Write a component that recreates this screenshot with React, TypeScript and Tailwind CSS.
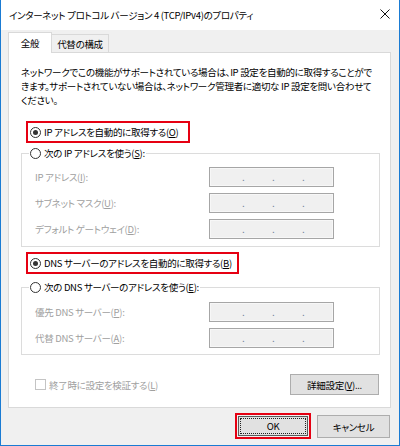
import type { ReactNode } from "react";

const font = {
  fontFamily: '"Noto Sans CJK JP", "Noto Sans", sans-serif',
};

const Radio = ({ checked }: { checked?: boolean }) => (
  <span className="flex h-[11px] w-[11px] shrink-0 items-center justify-center rounded-full border border-[#333333] bg-white">
    {checked && <span className="h-[5px] w-[5px] rounded-full bg-[#333333]" />}
  </span>
);

const IpInput = () => (
  <div className="flex h-[20px] w-[125px] items-center border border-[#a6a6a6] bg-[#f0f0f0] pl-[32px] text-[10px] leading-none text-[#6f8299] shadow-[inset_0_0_0_1px_#f7f7f7]">
    <span className="w-[30px]">.</span>
    <span className="w-[30px]">.</span>
    <span className="w-[30px]">.</span>
  </div>
);

const FieldRow = ({ label }: { label: ReactNode }) => (
  <div className="flex h-[20px] items-center pl-[13px]">
    <span className="w-[174px] text-[#a0a0a0]">{label}</span>
    <IpInput />
  </div>
);

const Group = ({
  legend,
  children,
  className,
}: {
  legend: ReactNode;
  children: ReactNode;
  className: string;
}) => (
  <fieldset className={`border border-[#dcdcdc] ${className}`}>
    <legend className="ml-[7px] flex h-[14px] items-center gap-[3px] bg-white px-[1px]">
      <Radio />
      <span>{legend}</span>
    </legend>
    {children}
  </fieldset>
);

export default function App() {
  return (
    <div
      style={font}
      className="flex h-[446px] w-[400px] flex-col whitespace-nowrap border-x border-b border-[#1a7bd3] bg-[#f0f0f0] text-[9.5px] leading-[14px] tracking-[-0.3px] text-black [font-feature-settings:'palt']"
    >
      {/* title bar */}
      <div className="flex h-[30px] shrink-0 items-center justify-between bg-white pl-[8px] pr-[8px]">
        <span>インターネット プロトコル バージョン 4 (TCP/IPv4)のプロパティ</span>
        <svg width="10" height="10" viewBox="0 0 10 10" className="mb-[2px] mr-[1px]">
          <path d="M0.5 0.5 L9.5 9.5 M9.5 0.5 L0.5 9.5" stroke="#111" strokeWidth="1" />
        </svg>
      </div>

      <div className="flex flex-1 flex-col pl-[7px] pr-[8px]">
        {/* tabs */}
        <div className="relative z-10 mt-[2px] flex h-[21px] items-end">
          <div className="flex h-[21px] w-[44px] items-center justify-center border border-b-0 border-[#d9d9d9] bg-white pb-[1px]">
            全般
          </div>
          <div className="mb-[1px] flex h-[18px] w-[57px] items-center justify-center border border-l-0 border-b-0 border-[#d9d9d9] bg-[#f0f0f0]">
            代替の構成
          </div>
        </div>

        {/* panel */}
        <div className="-mt-px flex h-[356px] flex-col border border-[#d9d9d9] bg-white pl-[12px] pr-[10px]">
          <p className="mt-[12px]">
            ネットワークでこの機能がサポートされている場合は、IP 設定を自動的に取得することがで
            <br />
            きます。サポートされていない場合は、ネットワーク管理者に適切な IP 設定を問い合わせて
            <br />
            ください。
          </p>

          <div className="ml-[5px] mt-[14px] flex h-[22px] w-[164px] items-center gap-[3px] border-2 border-[#e60012] pl-[2px]">
            <Radio checked />
            <span>
              IP アドレスを自動的に取得する(<u>O</u>)
            </span>
          </div>

          <Group
            className="mt-[3px] pb-[7px]"
            legend={
              <>
                次の IP アドレスを使う(<u>S</u>):
              </>
            }
          >
            <div className="mt-[7px] flex flex-col gap-[6px]">
              <FieldRow label={<>IP アドレス(<u>I</u>):</>} />
              <FieldRow label={<>サブネット マスク(<u>U</u>):</>} />
              <FieldRow label={<>デフォルト ゲートウェイ(<u>D</u>):</>} />
            </div>
          </Group>

          <div className="ml-[5px] mt-[5px] flex h-[22px] w-[213px] items-center gap-[3px] border-2 border-[#e60012] pl-[2px]">
            <Radio checked />
            <span>
              DNS サーバーのアドレスを自動的に取得する(<u>B</u>)
            </span>
          </div>

          <Group
            className="mt-[6px] pb-[6px]"
            legend={
              <>
                次の DNS サーバーのアドレスを使う(<u>E</u>):
              </>
            }
          >
            <div className="mt-[8px] flex flex-col gap-[6px]">
              <FieldRow label={<>優先 DNS サーバー(<u>P</u>):</>} />
              <FieldRow label={<>代替 DNS サーバー(<u>A</u>):</>} />
            </div>
          </Group>

          <div className="mt-[19px] flex items-center justify-between pl-[14px]">
            <div className="flex items-center gap-[3px] text-[#a0a0a0]">
              <span className="h-[11px] w-[11px] border border-[#c4c4c4] bg-white" />
              <span>
                終了時に設定を検証する(<u>L</u>)
              </span>
            </div>
            <button
              type="button"
              className="mr-[1px] flex h-[21px] w-[89px] items-center justify-center border border-[#adadad] bg-[#e1e1e1]"
            >
              詳細設定(<u>V</u>)...
            </button>
          </div>
        </div>

        {/* dialog buttons */}
        <div className="mt-[5px] flex items-start justify-end gap-[6px] pr-px">
          <div className="h-[26px] w-[76px] border-2 border-[#e60012] p-px">
            <button
              type="button"
              className="flex h-full w-full items-center justify-center border border-[#5a5a5a] bg-[#e1e1e1] outline-1 outline-dotted -outline-offset-3 outline-[#222]"
            >
              OK
            </button>
          </div>
          <button
            type="button"
            className="mt-[2px] flex h-[23px] w-[73px] items-center justify-center border border-[#adadad] bg-[#e1e1e1]"
          >
            キャンセル
          </button>
        </div>
      </div>
    </div>
  );
}
